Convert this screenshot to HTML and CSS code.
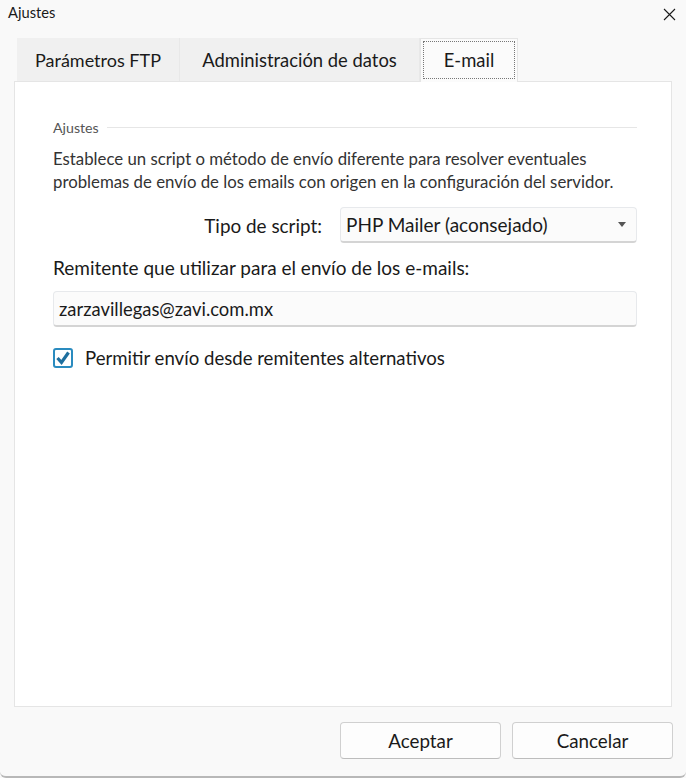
FILE: index.html
```html
<!DOCTYPE html>
<html lang="es">
<head>
<meta charset="utf-8">
<title>Ajustes</title>
<link rel="stylesheet" href="styles.css">
</head>
<body>
<div class="window">
  <div class="titlebar">
    <span class="title">Ajustes</span>
    <span class="close" aria-label="Cerrar">
      <svg width="13" height="13" viewBox="0 0 13 13"><path d="M1 1 L12 12 M12 1 L1 12" stroke="#1a1a1a" stroke-width="1.1" fill="none"/></svg>
    </span>
  </div>
  <div class="tabs">
    <div class="tab t1">Parámetros FTP</div>
    <div class="tab t2">Administración de datos</div>
    <div class="tab active"><span class="focus">E-mail</span></div>
  </div>
  <div class="panel">
    <div class="group-head">
      <span class="group-title">Ajustes</span>
      <span class="group-line"></span>
    </div>
    <p class="desc">Establece un script o método de envío diferente para resolver eventuales<br>problemas de envío de los emails con origen en la configuración del servidor.</p>
    <div class="row-select">
      <span class="label">Tipo de script:</span>
      <div class="select">
        <span>PHP Mailer (aconsejado)</span>
        <svg class="arrow" width="8" height="5" viewBox="0 0 8 5"><path d="M0 0 H8 L4 5 Z" fill="#555"/></svg>
      </div>
    </div>
    <div class="field-label">Remitente que utilizar para el envío de los e-mails:</div>
    <div class="input">zarzavillegas@zavi.com.mx</div>
    <div class="check-row">
      <span class="checkbox">
        <svg width="20" height="20" viewBox="0 0 20 20"><rect x="1" y="1" width="18" height="18" rx="2" fill="#fff" stroke="#2a8bbf" stroke-width="2"/><path d="M4.5 10 L8.5 14.5 L15.5 4.5" stroke="#1e6f9e" stroke-width="3.2" fill="none" stroke-linejoin="miter"/></svg>
      </span>
      <span class="check-label">Permitir envío desde remitentes alternativos</span>
    </div>
  </div>
  <div class="footer">
    <button class="btn">Aceptar</button>
    <button class="btn">Cancelar</button>
  </div>
</div>
</body>
</html>
```
FILE: styles.css
```css
html, body {
  margin: 0;
  padding: 0;
}
body {
  width: 686px;
  height: 778px;
  overflow: hidden;
  background: #f9f9f9;
  font-family: Lato, "Noto Sans", sans-serif;
  color: #1a1a1a;
}
.window {
  height: 776px;
  border-bottom: 2px solid #b8b8b8;
  border-radius: 0 0 6px 6px;
  background: #f9f9f9;
}
.titlebar {
  height: 30px;
  display: flex;
  justify-content: space-between;
  align-items: flex-start;
  padding: 0 10px 0 8px;
}
.title {
  font-size: 14.7px;
  line-height: 24px;
}
.close {
  padding-top: 5px;
}
.tabs {
  display: flex;
  margin: 8px 0 0 17px;
  height: 43px;
  align-items: flex-end;
}
.tab {
  height: 43px;
  box-sizing: border-box;
  display: flex;
  align-items: center;
  justify-content: center;
  font-size: 18.4px;
  background: #f0f0f0;
  border-right: 1px solid #e8e8e8;
}
.t1 { width: 163px; font-size: 18px; }
.t2 { width: 240px; }
.tab.active {
  width: 98px;
  height: 44px;
  background: #fbfbfb;
  border: 1px solid #e5e5e5;
  border-bottom: none;
  margin-bottom: -1px;
  position: relative;
  z-index: 1;
  padding: 2px 2px 3px;
}
.focus {
  width: 100%;
  height: 100%;
  box-sizing: border-box;
  border: 1px dotted #777;
  display: flex;
  align-items: center;
  justify-content: center;
}
.panel {
  margin: 0 14px;
  height: 626px;
  box-sizing: border-box;
  border: 1px solid #e5e5e5;
  background: #fff;
  padding: 36px 34px 0 38px;
}
.group-head {
  display: flex;
  align-items: center;
  gap: 8px;
  height: 18px;
}
.group-title {
  font-size: 14.2px;
  color: #555;
}
.group-line {
  flex: 1;
  height: 1px;
  background: #e6e6e6;
}
.desc {
  margin: 11px 0 0;
  font-size: 16.8px;
  line-height: 23px;
  color: #333;
}
.row-select {
  display: flex;
  align-items: center;
  justify-content: flex-end;
  gap: 18px;
  margin-top: 14px;
}
.label {
  font-size: 18.9px;
}
.select {
  width: 297px;
  height: 36px;
  box-sizing: border-box;
  border: 1px solid #e7e9ec;
  border-bottom: 2px solid #d4d4d4;
  border-radius: 4px;
  background: #fbfbfb;
  display: flex;
  align-items: center;
  justify-content: space-between;
  padding: 0 10px 0 5px;
  font-size: 19px;
}
.field-label {
  margin-top: 15px;
  font-size: 19px;
  line-height: 20px;
}
.input {
  margin-top: 13px;
  height: 36px;
  box-sizing: border-box;
  border: 1px solid #e7e9ec;
  border-bottom: 2px solid #d4d4d4;
  border-radius: 4px;
  background: #fbfbfb;
  display: flex;
  align-items: center;
  padding: 0 5px;
  font-size: 18.4px;
}
.check-row {
  display: flex;
  align-items: center;
  gap: 12px;
  margin-top: 20px;
}
.checkbox {
  display: flex;
}
.check-label {
  font-size: 18.6px;
}
.footer {
  display: flex;
  justify-content: flex-end;
  gap: 11px;
  padding: 15px 13px 0 0;
}
.btn {
  width: 161px;
  height: 37px;
  box-sizing: border-box;
  border: 1px solid #d0d0d0;
  border-bottom-color: #bdbdbd;
  border-radius: 4px;
  background: #fdfdfd;
  font-family: inherit;
  font-size: 18.8px;
  color: #1a1a1a;
}
```
